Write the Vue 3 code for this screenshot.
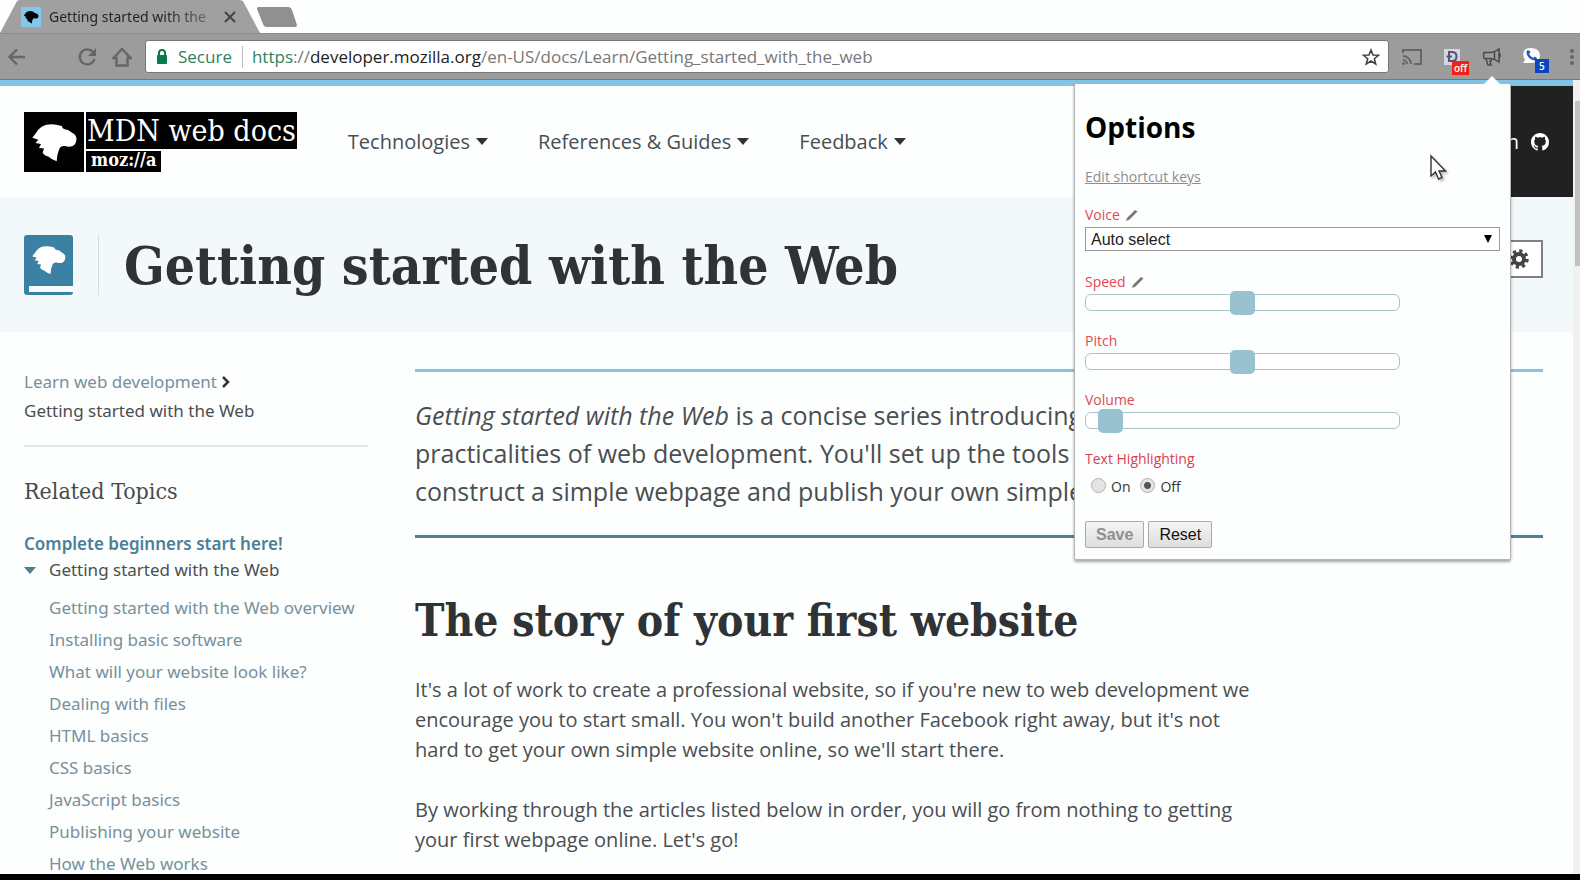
<script setup>
import { ref } from 'vue'

const dino =
  'M8.300 25.700 L12 21 L14 18 Q18 13.500 22.700 12.700 Q30 11.600 37.700 14 Q38.500 16.500 40 17 Q45 17.500 47.700 20.500 Q52.500 22.500 52.500 27 Q52 32.500 48.700 34 Q45 35.500 41 34 Q36.500 33.500 35.300 37 Q33 42 32.700 49.300 Q28 48 24.300 44.500 Q20 43.500 18.700 40.500 L20 36.500 L15 36 L17 32 L11.500 31 L14.300 27.700 Z'

const menu = ['Technologies', 'References & Guides', 'Feedback']
const topics = [
  'Getting started with the Web overview',
  'Installing basic software',
  'What will your website look like?',
  'Dealing with files',
  'HTML basics',
  'CSS basics',
  'JavaScript basics',
  'Publishing your website',
  'How the Web works',
]
const sliders = ref([
  { id: 'speed', label: 'Speed', editable: true, value: 50 },
  { id: 'pitch', label: 'Pitch', editable: false, value: 50 },
  { id: 'volume', label: 'Volume', editable: false, value: 4 },
])
const voice = ref('auto')
const highlight = ref('off')
</script>

<template>
  <div class="browser">
    <div class="tabs">
      <div class="tab">
        <svg class="tab-shape" viewBox="0 0 260 33" preserveAspectRatio="none" aria-hidden="true">
          <path d="M0 33 L16 3 Q17 0 20 0 H239 Q243 0 244 3 L260 33 Z" fill="#a0a0a0" />
        </svg>
        <svg class="favicon" viewBox="0 0 60 60" aria-hidden="true">
          <rect width="60" height="60" fill="#83c7ea" />
          <path :d="dino" fill="#050505" />
        </svg>
        <span class="tab-title">Getting started with the</span>
        <button class="tab-close" aria-label="Close tab">
          <svg width="12" height="12" viewBox="0 0 12 12"><path d="M1 1 L11 11 M11 1 L1 11" stroke="#444" stroke-width="2" /></svg>
        </button>
      </div>
      <svg class="new-tab" width="44" height="22" viewBox="0 0 44 22" aria-hidden="true">
        <path d="M3 1 H33 Q36 1 37 4 L42 19 Q42 21 40 21 H12 Q9 21 8 18 L2 3 Q2 1 3 1 Z" fill="#909090" />
      </svg>
    </div>

    <div class="toolbar">
      <button class="tool back" aria-label="Back">
        <svg width="20" height="20" viewBox="0 0 20 20"><path d="M18 10 H3 M10 2.500 L2.500 10 L10 17.500" class="line" /></svg>
      </button>
      <button class="tool reload" aria-label="Reload">
        <svg width="20" height="20" viewBox="0 0 20 20"><path d="M16 5 A7.500 7.500 0 1 0 17.500 12" class="line" /><path d="M19 1 V9 H11 Z" fill="#666" /></svg>
      </button>
      <button class="tool home" aria-label="Home">
        <svg width="20" height="20" viewBox="0 0 20 20"><path d="M1.500 11 L10 2 L18.500 11 H15.500 V18.500 H4.500 V11 Z" class="line" /></svg>
      </button>
      <div class="address">
        <svg width="12" height="16" viewBox="0 0 12 16" aria-hidden="true">
          <path d="M3 7 V4 A3 3 0 0 1 9 4 V7" fill="none" stroke="#0b7a4b" stroke-width="2" />
          <rect x="1" y="6" width="10" height="9" rx="1" fill="#0b7a4b" />
        </svg>
        <span class="secure">Secure</span>
        <span class="url"><span class="green">https</span><span class="dim">://</span>developer.mozilla.org<span class="dim">/en-US/docs/Learn/Getting_started_with_the_web</span></span>
        <button class="star" aria-label="Bookmark this page">
          <svg width="18" height="18" viewBox="0 0 18 18"><path d="M9 2 L11 7 L16.500 7.300 L12.300 10.700 L13.700 16 L9 13 L4.300 16 L5.700 10.700 L1.500 7.300 L7 7 Z" fill="none" stroke="#444" stroke-width="1.600" /></svg>
        </button>
      </div>
      <div class="extensions">
        <button class="ext" aria-label="Cast">
          <svg width="22" height="18" viewBox="0 0 22 18"><path d="M2 5 V2 H20 V16 H13" class="thin" /><path d="M2 8 A8 8 0 0 1 10 16 M2 12 A4 4 0 0 1 6 16" class="thin" /><circle cx="2.500" cy="15.500" r="1.500" fill="#666" /></svg>
        </button>
        <button class="ext" aria-label="Dictionary">
          <svg width="16" height="16" viewBox="0 0 16 16"><rect width="16" height="16" fill="#d5d5e4" /><path d="M5 3 H8 Q12.500 3 12.500 7.500 Q12.500 12 8 12 H5 Z M2.500 7.500 H8" fill="none" stroke="#555573" stroke-width="2" /></svg>
          <span class="badge red">off</span>
        </button>
        <button class="ext" aria-label="Read aloud">
          <svg width="20" height="20" viewBox="0 0 20 20"><path d="M2 5.500 Q1 8.500 2 11.500 H9 Q13 12 17 15 V2 Q13 5 9 5.500 Z M4 12 L6 18 H9 L8 14 L10 13 M12.500 5 V12 M17 6 Q19.500 8.500 17 11" fill="none" stroke="#4b4b4b" stroke-width="1.500" /></svg>
        </button>
        <button class="ext" aria-label="Calls">
          <svg width="20" height="20" viewBox="0 0 20 20"><path d="M9 1 Q17 1 18 8 Q18 15 10 16 L1 16 L3 13 Q-1 5 4 2 Q6 1 9 1 Z" fill="#fff" /><path d="M5.500 5 Q6 11.500 14 12.500 M5 4 L8 5.500 M12 10.500 L14.500 12" fill="none" stroke="#2458b8" stroke-width="2.400" /></svg>
          <span class="badge blue">5</span>
        </button>
        <button class="ext dots" aria-label="Menu">
          <svg width="4" height="18" viewBox="0 0 4 18"><circle cx="2" cy="3" r="2" fill="#666" /><circle cx="2" cy="9" r="2" fill="#666" /><circle cx="2" cy="15" r="2" fill="#666" /></svg>
        </button>
      </div>
    </div>

    <div class="viewport">
      <div class="page">
        <header class="site-header">
          <a class="logo" href="#">
            <svg width="60" height="60" viewBox="0 0 60 60" aria-hidden="true"><rect width="60" height="60" /><path :d="dino" fill="#fff" /></svg>
            <span class="logo-text">
              <span class="logo-name">MDN web docs</span>
              <span class="logo-moz">moz://a</span>
            </span>
          </a>
          <nav class="menu">
            <button v-for="m in menu" :key="m" class="menu-item">
              {{ m }}<svg width="12" height="7" viewBox="0 0 12 7" aria-hidden="true"><path d="M0 0 H12 L6 7 Z" fill="#333" /></svg>
            </button>
          </nav>
          <a class="sign-in" href="#">
            Sign in
            <svg width="18" height="18" viewBox="0 0 16 16" aria-hidden="true"><path fill="#fff" d="M8 0C3.580 0 0 3.580 0 8c0 3.540 2.290 6.530 5.470 7.590.4.070.55-.17.55-.38 0-.19-.01-.82-.01-1.490C4 14.090 3.480 13.230 3.320 12.780c-.09-.23-.48-.94-.82-1.130-.28-.15-.68-.52-.01-.53.63-.01 1.080.58 1.230.82.72 1.210 1.870.87 2.330.66.070-.52.28-.87.51-1.070-1.780-.2-3.640-.89-3.640-3.950 0-.87.31-1.590.82-2.150-.08-.2-.36-1.020.08-2.120 0 0 .67-.21 2.200.82.64-.18 1.320-.27 2-.27s1.360.09 2 .27c1.530-1.040 2.200-.82 2.200-.82.44 1.100.16 1.920.08 2.120.51.56.82 1.270.82 2.150 0 3.070-1.870 3.750-3.650 3.950.29.25.54.73.54 1.480 0 1.070-.01 1.930-.01 2.200 0 .21.15.46.55.38A8.010 8.010 0 0 0 16 8c0-4.420-3.580-8-8-8z" /></svg>
          </a>
        </header>

        <div class="title-band">
          <svg width="49" height="60" viewBox="0 0 49 60" aria-hidden="true">
            <rect width="49" height="60" rx="3" fill="#3a81a4" />
            <path d="M5 51 H49 V57 H5 Z" fill="#f6fbfc" />
            <g transform="translate(2 2) scale(.750)"><path :d="dino" fill="#fff" /></g>
          </svg>
          <h1>Getting started with the Web</h1>
          <button class="settings" aria-label="Page settings">
            <svg width="20" height="20" viewBox="0 0 20 20"><circle cx="10" cy="10" r="5" fill="none" stroke="#444" stroke-width="4" /><circle cx="10" cy="10" r="8" fill="none" stroke="#444" stroke-width="3.500" stroke-dasharray="3.140 3.140" /></svg>
          </button>
        </div>

        <div class="columns">
          <aside>
            <div class="crumbs">
              <a href="#">Learn web development</a>
              <svg width="8" height="12" viewBox="0 0 8 12" aria-hidden="true"><path d="M1 1 L6 6 L1 11" fill="none" stroke="#333" stroke-width="2.500" /></svg>
              <div>Getting started with the Web</div>
            </div>
            <h3>Related Topics</h3>
            <a class="strong-link" href="#">Complete beginners start here!</a>
            <div class="group">
              <svg width="12" height="7" viewBox="0 0 12 7" aria-hidden="true"><path d="M0 0 H12 L6 7 Z" fill="#4c7f92" /></svg>
              <span>Getting started with the Web</span>
            </div>
            <ul>
              <li v-for="t in topics" :key="t"><a href="#">{{ t }}</a></li>
            </ul>
          </aside>
          <main>
            <p class="intro">
              <em>Getting started with the Web</em> is a concise series introducing<br />
              practicalities of web development. You'll set up the tools<br />
              construct a simple webpage and publish your own simple
            </p>
            <h2>The story of your first website</h2>
            <p class="body">
              It's a lot of work to create a professional website, so if you're new to web development we
              encourage you to start small. You won't build another Facebook right away, but it's not
              hard to get your own simple website online, so we'll start there.
            </p>
            <p class="body">
              By working through the articles listed below in order, you will go from nothing to getting
              your first webpage online. Let's go!
            </p>
          </main>
        </div>
      </div>
      <div class="scrollbar"><div class="thumb"></div></div>
    </div>
    <div class="footer-strip"></div>

    <form class="popup" @submit.prevent>
      <h1>Options</h1>
      <a class="shortcut" href="#">Edit shortcut keys</a>
      <div class="field voice">
        <div class="label-row">
          <label for="voice">Voice</label>
          <svg width="12" height="12" viewBox="0 0 12 12" aria-hidden="true"><path d="M0 12 L1 9 L9 1 L11.500 2.500 L3.500 10.500 Z" fill="#777" /></svg>
        </div>
        <div class="select-box">
          <select id="voice" v-model="voice"><option value="auto">Auto select</option></select>
          <svg width="8" height="8" viewBox="0 0 8 8" aria-hidden="true"><path d="M0 0 H8 L4 8 Z" fill="#000" /></svg>
        </div>
      </div>
      <div v-for="s in sliders" :key="s.id" class="field">
        <div class="label-row">
          <label :for="s.id">{{ s.label }}</label>
          <svg v-if="s.editable" width="12" height="12" viewBox="0 0 12 12" aria-hidden="true"><path d="M0 12 L1 9 L9 1 L11.500 2.500 L3.500 10.500 Z" fill="#777" /></svg>
        </div>
        <input :id="s.id" v-model="s.value" type="range" min="0" max="100" />
      </div>
      <fieldset>
        <legend>Text Highlighting</legend>
        <label><input v-model="highlight" type="radio" name="highlight" value="on" />On</label>
        <label><input v-model="highlight" type="radio" name="highlight" value="off" />Off</label>
      </fieldset>
      <div class="actions">
        <button class="save" type="submit" disabled>Save</button>
        <button type="reset">Reset</button>
      </div>
    </form>

    <svg class="cursor" width="20" height="28" viewBox="0 0 20 28" aria-hidden="true">
      <path d="M2 2 V22 L6.500 18 L9.500 25 L13 23.500 L10 17 H16.500 Z" fill="#fff" stroke="#333" stroke-width="1.400" />
    </svg>
  </div>
</template>

<style>
body {
  margin: 0;
  overflow: hidden;
}
</style>

<style scoped>
* {
  box-sizing: border-box;
}
.browser {
  position: relative;
  display: flex;
  flex-direction: column;
  height: 100vh;
  overflow: hidden;
  background: #fdfefe;
  color: #4a4e51;
  font-family: "Open Sans", "Noto Sans", sans-serif;
  font-size: 16px;
}
button {
  font: inherit;
  color: inherit;
  background: none;
  border: 0;
  padding: 0;
}
svg {
  display: block;
  flex: none;
}
a {
  color: #76909c;
  text-decoration: none;
}
.line {
  fill: none;
  stroke: #666;
  stroke-width: 2.4;
}
.thin {
  fill: none;
  stroke: #666;
  stroke-width: 2;
}

.tabs {
  display: flex;
  align-items: center;
  height: 33px;
}
.tab {
  position: relative;
  display: flex;
  align-items: center;
  width: 260px;
  height: 33px;
  padding: 0 24px 0 21px;
}
.tab-shape {
  position: absolute;
  inset: 0;
  width: 100%;
  height: 100%;
}
.favicon {
  position: relative;
  width: 20px;
  height: 20px;
}
.tab-title {
  position: relative;
  flex: 1;
  margin-left: 8px;
  font-family: "Noto Sans", sans-serif;
  font-size: 14px;
  line-height: 20px;
  white-space: nowrap;
  background: linear-gradient(90deg, #222 65%, #666 90%);
  background-clip: text;
  color: transparent;
}
.tab-close {
  position: relative;
}
.new-tab {
  margin-left: -5px;
}

.toolbar {
  display: flex;
  align-items: center;
  height: 47px;
  padding: 0 4px 0 7px;
  background: #9c9c9c;
  border-top: 1px solid #8c8c8c;
  border-bottom: 1px solid #777;
}
.reload {
  margin-left: 50px;
}
.home {
  margin: 0 13px 0 15px;
}
.address {
  display: flex;
  flex: 1;
  align-items: center;
  height: 33px;
  padding: 0 8px 0 10px;
  background: #fff;
  border: 1px solid #777;
  border-radius: 3px;
  font-size: 17px;
  line-height: 22px;
}
.secure {
  margin-left: 10px;
  padding-right: 10px;
  color: #2f7f5e;
  border-right: 1px solid #bbb;
}
.url {
  flex: 1;
  margin-left: 9px;
  color: #222;
  white-space: nowrap;
}
.green {
  color: #2f7f5e;
}
.dim {
  color: #777;
}
.extensions {
  display: flex;
  align-items: center;
  gap: 20px;
  margin-left: 13px;
}
.ext {
  position: relative;
  display: flex;
  justify-content: center;
  width: 20px;
}
.ext.dots {
  width: 8px;
  margin-left: 6px;
}
.badge {
  position: absolute;
  top: 12px;
  left: 10px;
  height: 14px;
  padding: 0 2px;
  color: #fff;
  font-size: 10px;
  font-weight: 600;
  line-height: 14px;
}
.badge.red {
  background: #f42113;
}
.badge.blue {
  left: 13px;
  padding: 0 4px;
  background: #0b45bd;
}

.viewport {
  display: flex;
  flex: 1;
  min-height: 0;
}
.page {
  flex: 1;
  overflow: hidden;
  border-top: 6px solid #83c3e6;
}
.scrollbar {
  width: 7px;
  padding: 21px 0 0 2px;
  background: #f1f1f1;
}
.thumb {
  height: 165px;
  background: #c1c1c1;
}
.footer-strip {
  height: 6px;
  background: #000;
}

.site-header {
  display: flex;
  align-items: center;
  height: 111px;
  padding-left: 24px;
}
.logo {
  display: flex;
  gap: 2px;
  color: #fff;
  font-family: "DejaVu Serif Condensed", "DejaVu Serif", serif;
}
.logo-text {
  display: flex;
  flex-direction: column;
  align-items: flex-start;
  gap: 2px;
}
.logo-name,
.logo-moz {
  background: #000;
  white-space: nowrap;
}
.logo-name {
  height: 37px;
  padding: 0 1px;
  font-size: 30px;
  line-height: 37px;
}
.logo-moz {
  height: 21px;
  padding: 0 5px;
  font-size: 18px;
  font-weight: 700;
  line-height: 18px;
}
.menu {
  display: flex;
  flex: 1;
  gap: 50px;
  margin-left: 51px;
}
.menu-item {
  display: flex;
  align-items: center;
  gap: 6px;
  font-size: 20px;
  white-space: nowrap;
}
.sign-in {
  display: flex;
  align-items: center;
  align-self: stretch;
  gap: 12px;
  padding: 0 24px;
  background: #212121;
  color: #fff;
  font-size: 20px;
}

.title-band {
  display: flex;
  align-items: center;
  height: 135px;
  padding: 0 30px 0 24px;
  background: #f3f9fa;
}
.title-band h1 {
  flex: 1;
  margin: 0 0 0 25px;
  padding-left: 25px;
  border-left: 1px solid #d6dddf;
  font-size: 53px;
  line-height: 60px;
  white-space: nowrap;
}
h1,
h2,
h3 {
  color: #2f3335;
  font-family: "DejaVu Serif Condensed", "DejaVu Serif", serif;
}
.settings {
  display: flex;
  align-items: center;
  justify-content: center;
  width: 49px;
  height: 38px;
  margin-bottom: 12px;
  background: #fff;
  border: 2px solid #7d8183;
}

.columns {
  display: grid;
  grid-template-columns: 344px 1fr;
  column-gap: 47px;
  padding: 35px 30px 0 24px;
}
aside {
  font-family: "Noto Sans", sans-serif;
  font-size: 17px;
}
.crumbs {
  padding-bottom: 20px;
  border-bottom: 2px solid #e6e8e9;
  line-height: 29px;
}
.crumbs svg {
  display: inline-block;
  margin-left: 5px;
}
h3 {
  margin: 29px 0 24px;
  color: #474b4d;
  font-size: 23px;
  font-weight: 400;
  line-height: 30px;
}
.strong-link {
  display: block;
  color: #4c7f96;
  font-weight: 600;
  line-height: 28px;
}
.group {
  display: flex;
  align-items: center;
  gap: 13px;
  height: 24px;
  overflow: hidden;
  line-height: 24px;
}
ul {
  margin: 10px 0 0 25px;
  padding: 0;
  list-style: none;
  line-height: 32px;
}
main {
  min-width: 0;
  padding-top: 2px;
}
.intro {
  margin: 0;
  padding: 24px 0 25px;
  border-top: 3px solid #86c5dd;
  border-bottom: 3px solid #4d8199;
  font-size: 25px;
  line-height: 38px;
  white-space: nowrap;
}
h2 {
  margin: 53px 0 24px;
  font-size: 44px;
  line-height: 60px;
}
.body {
  max-width: 850px;
  margin: 0 0 30px;
  font-size: 20px;
  line-height: 30px;
}

.popup {
  position: absolute;
  top: 83px;
  right: 69px;
  width: 437px;
  padding: 24px 10px 11px;
  background: #fdfefe;
  border: 1px solid #b5b5b5;
  border-radius: 2px;
  box-shadow: 0 2px 3px rgba(0, 0, 0, 0.35);
  font-size: 14px;
}
.popup::before {
  content: "";
  position: absolute;
  top: -8px;
  right: 10px;
  border: 8px solid transparent;
  border-top: 0;
  border-bottom-color: #fdfefe;
}
.popup h1 {
  margin: 0 0 21px;
  color: #000;
  font-family: "Open Sans", "Noto Sans", sans-serif;
  font-size: 28px;
  line-height: 38px;
}
.shortcut {
  display: block;
  color: #8d8d8d;
  line-height: 20px;
  text-decoration: underline;
}
.field {
  height: 59px;
}
.field.voice {
  height: 67px;
  margin-top: 18px;
}
.label-row {
  display: flex;
  align-items: center;
  gap: 6px;
  color: #e04a50;
  line-height: 20px;
}
.select-box {
  position: relative;
  margin-top: 2px;
}
.select-box svg {
  position: absolute;
  top: 8px;
  right: 8px;
  pointer-events: none;
}
select {
  appearance: none;
  width: 100%;
  height: 24px;
  padding: 0 5px;
  color: #222;
  background: #fff;
  border: 1px solid #999;
  border-radius: 0;
  font: 16px "Liberation Sans", sans-serif;
}
input[type="range"] {
  appearance: none;
  display: block;
  width: 315px;
  height: 17px;
  margin: 2px 0 0;
  background: #fff;
  border: 1px solid #a9c3c8;
  border-radius: 6px;
}
input[type="range"]::-webkit-slider-thumb {
  appearance: none;
  width: 25px;
  height: 24px;
  background: #98c2cf;
  border-radius: 5px;
}
fieldset {
  display: flex;
  gap: 10px;
  margin: 0;
  padding: 6px 0 0 6px;
  border: 0;
}
legend {
  margin-left: -6px;
  padding: 0;
  color: #d8404f;
  line-height: 20px;
}
fieldset label {
  display: flex;
  align-items: center;
  gap: 5px;
  color: #333;
  line-height: 24px;
}
input[type="radio"] {
  appearance: none;
  width: 15px;
  height: 15px;
  margin: 0 0 4px;
  background: #e4e4e4;
  border: 1px solid #b2b2b2;
  border-radius: 50%;
}
input[type="radio"]:checked {
  background: radial-gradient(circle, #555 0 3px, #e4e4e4 4px);
}
.actions {
  display: flex;
  gap: 4px;
  margin-top: 22px;
}
.actions button {
  height: 27px;
  padding: 0 10px;
  color: #111;
  background: linear-gradient(#f4f4f4, #dedede);
  border: 1px solid #aaa;
  border-radius: 2px;
  font: 16px "Liberation Sans", sans-serif;
}
.actions .save {
  color: #8f8f8f;
  font-weight: 700;
}
.cursor {
  position: absolute;
  top: 154px;
  right: 131px;
  filter: drop-shadow(2px 2px 1px rgba(0, 0, 0, 0.25));
}
</style>
